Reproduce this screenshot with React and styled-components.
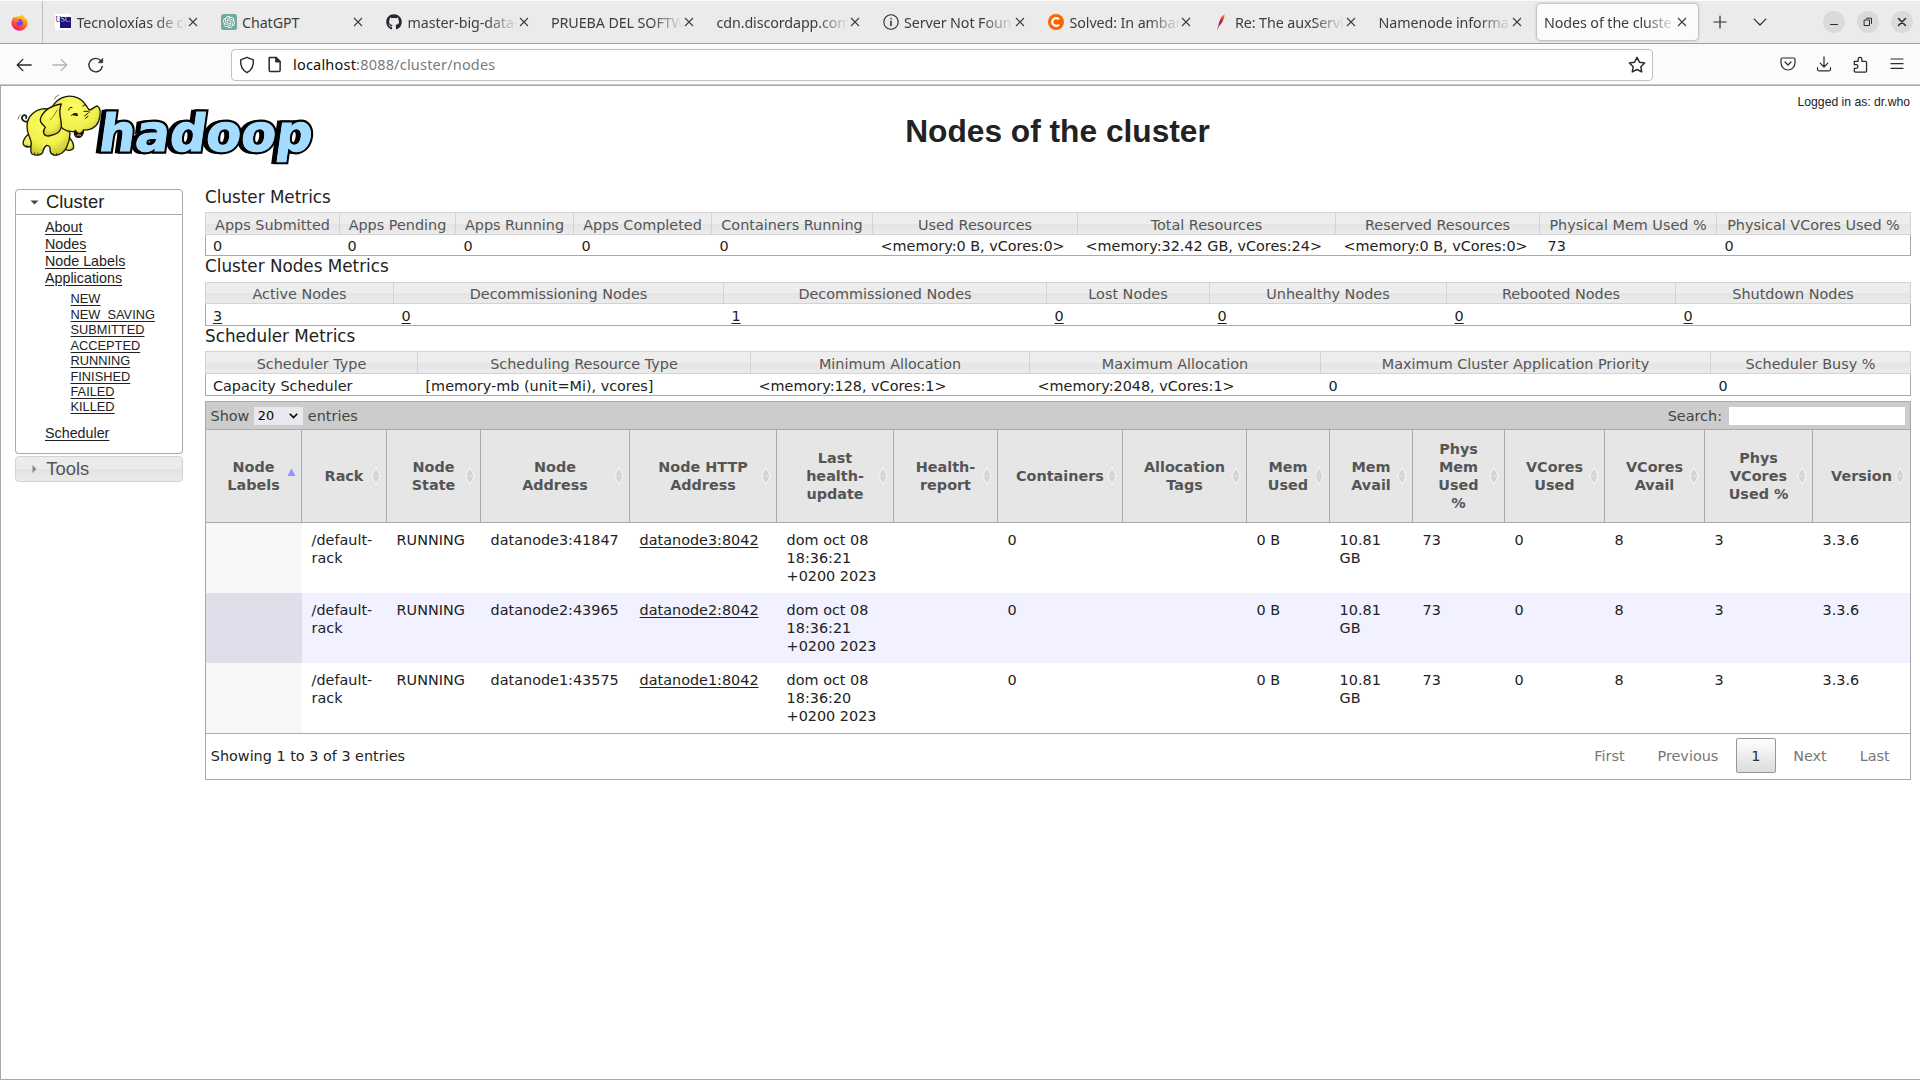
import React from "react";
import styled, { createGlobalStyle, css } from "styled-components";
import { FaGithub, FaFirefoxBrowser } from "react-icons/fa";
import { SiOpenai } from "react-icons/si";

const sans = '"DejaVu Sans", sans-serif';
const arial = '"Liberation Sans", Arial, sans-serif';
const chromeFont = '"Noto Sans", "Open Sans", sans-serif';

const GlobalStyle = createGlobalStyle`
  * { box-sizing: border-box; }
  html, body { margin: 0; padding: 0; background: #fff; }
  body { overflow: hidden; }
  table { border-collapse: separate; border-spacing: 0; }
`;

const Window = styled.div`
  width: 1920px;
  height: 1080px;
  display: flex;
  flex-direction: column;
  overflow: hidden;
  color: #222;
  font-family: ${sans};
`;

/* ---------- browser chrome ---------- */

const TabStrip = styled.div`
  height: 44px;
  flex: none;
  display: flex;
  align-items: center;
  background: #ebebeb;
  border-top: 1px solid #fbfbfb;
  border-bottom: 1px solid #9f9f9f;
  color: #3d3d3d;
  font-family: ${chromeFont};
`;

const PinnedTab = styled.div`
  width: 43px;
  height: 42px;
  display: flex;
  align-items: center;
  justify-content: center;
  padding-right: 3px;
  border-right: 1px solid #bdbdbd;
`;

const Tabs = styled.div`
  display: flex;
  gap: 4px;
  padding-left: 4px;
  height: 36px;
`;

const Tab = styled.div`
  width: 161.5px;
  height: 36px;
  display: flex;
  align-items: center;
  gap: 6px;
  padding: 0 8px;
  border-radius: 4px;
  ${(p) =>
    p.$active &&
    css`
      background: #fbfbfb;
      box-shadow: 0 0 3px rgba(0, 0, 0, 0.45);
    `}
`;

const TabIcon = styled.span`
  width: 16px;
  height: 16px;
  flex: none;
  display: flex;
  align-items: center;
  justify-content: center;
`;

const TabLabel = styled.span`
  flex: 1;
  min-width: 0;
  padding-top: 1px;
  margin-left: -0.5px;
  overflow: hidden;
  white-space: nowrap;
  font-size: 14.3px;
  line-height: 20px;
  letter-spacing: -0.1px;
  ${(p) =>
    p.$fade &&
    css`
      -webkit-mask-image: linear-gradient(to left, transparent, #000 32px);
      mask-image: linear-gradient(to left, transparent, #000 32px);
    `}
`;

const CloseButton = styled.span`
  width: 10px;
  margin: 0 3px 0 -5px;
  display: flex;
`;

const StripActions = styled.div`
  display: flex;
  gap: 24px;
  margin-left: 14px;
`;

const WindowButtons = styled.div`
  display: flex;
  gap: 12px;
  margin-left: auto;
  padding-right: 7px;
`;

const WindowButton = styled.span`
  width: 22px;
  height: 22px;
  border-radius: 50%;
  background: #dadada;
  display: flex;
  align-items: center;
  justify-content: center;
`;

const NavBar = styled.div`
  height: 42px;
  flex: none;
  display: flex;
  align-items: center;
  background: #fbfbfb;
  border-bottom: 1px solid #a9a9a9;
  box-shadow: inset 0 -1px #c9c9c9;
  font-family: ${chromeFont};
`;

const NavButtons = styled.div`
  width: 231px;
  padding-left: 15px;
  display: flex;
  gap: 18px;
`;

const UrlBar = styled.div`
  width: 1422px;
  height: 32px;
  display: flex;
  align-items: center;
  padding: 0 6px;
  background: #fff;
  border: 1px solid #c1c1c1;
  border-radius: 4px;
`;

const UrlIcons = styled.span`
  display: flex;
  align-items: center;
  gap: 10px;
`;

const UrlText = styled.span`
  flex: 1;
  margin-left: 10px;
  padding-bottom: 2px;
  font-size: 14.5px;
  line-height: 20px;
  letter-spacing: 0.2px;
  color: #7b7b7b;
  b {
    font-weight: 400;
    color: #111;
  }
`;

const NavActions = styled.div`
  margin-left: auto;
  padding-right: 15.5px;
  display: flex;
  gap: 20px;
`;

/* ---------- page ---------- */

const Page = styled.div`
  flex: 1;
  border-left: 1px solid #a9a9a9;
  border-bottom: 1px solid #a9a9a9;
  padding: 4px 9px 0 14px;
`;

const Header = styled.div`
  height: 99px;
  display: grid;
  grid-template-columns: 190px 1fr;
`;

const LogoBox = styled.div`
  width: 190px;
  overflow: visible;
  svg {
    display: block;
    overflow: visible;
  }
`;

const TitleBox = styled.div`
  display: flex;
  flex-direction: column;
  padding-right: 1px;
  font-family: ${arial};
`;

const Login = styled.div`
  align-self: flex-end;
  margin-top: 5px;
  font-size: 12.2px;
  line-height: 14px;
`;

const Title = styled.h1`
  margin: 4px 0 0;
  text-align: center;
  font-size: 31.7px;
  line-height: 36px;
  font-weight: 700;
`;

const Columns = styled.div`
  display: grid;
  grid-template-columns: 168px 1706px;
  column-gap: 22px;
  align-items: start;
`;

const Sidebar = styled.nav`
  font-family: ${arial};
`;

const Section = styled.h3`
  margin: 0;
  height: 26px;
  display: flex;
  align-items: center;
  gap: ${(p) => (p.$open ? 7 : 9.3)}px;
  padding-left: ${(p) => (p.$open ? 14 : 16)}px;
  font-weight: 400;
  font-size: 18.4px;
  line-height: 24px;
  border: 1px solid ${(p) => (p.$open ? "#aaa" : "#d3d3d3")};
  border-radius: ${(p) => (p.$open ? "4px 4px 0 0" : "4px")};
  color: ${(p) => (p.$open ? "#212121" : "#555")};
  background: ${(p) =>
    p.$open ? "#fff" : "linear-gradient(#ececec 50%, #e3e3e3 50%, #ebebeb)"};
`;

const SectionBody = styled.div`
  height: 239px;
  margin-bottom: 2px;
  padding: 4px 0 0 29px;
  border: 1px solid #aaa;
  border-top: 0;
  border-radius: 0 0 4px 4px;
`;

const MenuLink = styled.a`
  display: block;
  font-size: ${(p) => (p.$small ? 12.8 : 14.3)}px;
  line-height: ${(p) => (p.$small ? 15.45 : 17)}px;
  color: #222;
  text-decoration: underline;
  text-decoration-thickness: 1px;
  text-underline-offset: 2px;
`;

const SubMenu = styled.div`
  padding: 4.3px 0 10.1px 25.5px;
`;

const Main = styled.main`
  display: flex;
  flex-direction: column;
`;

const MetricHeading = styled.h3`
  margin: ${(p) => p.$pull || 0}px 0 0;
  height: ${(p) => p.$height}px;
  font-size: 16.8px;
  line-height: 20px;
  font-weight: 400;
`;

const Table = styled.table`
  width: 1706px;
  table-layout: fixed;
  font-size: 14.4px;
  line-height: 18px;
`;

const MetricTh = styled.th`
  height: ${(p) => p.$height}px;
  padding: ${(p) => p.$top}px 0 0;
  vertical-align: top;
  font-weight: 400;
  color: #555;
  white-space: nowrap;
  background: linear-gradient(#ededed 50%, #e4e4e4 50%, #ebebeb);
  border: 1px solid #d3d3d3;
  border-left-width: 0;
  &:first-child {
    border-left-width: 1px;
  }
`;

const MetricTd = styled.td`
  height: ${(p) => p.$height}px;
  padding: ${(p) => p.$top}px 0 0 7.5px;
  vertical-align: top;
  white-space: nowrap;
  border-bottom: 1px solid #aaa;
  &:first-child {
    padding-left: 7px;
    border-left: 1px solid #aaa;
  }
  &:last-child {
    border-right: 1px solid #aaa;
  }
`;

const CellLink = styled.a`
  color: #222;
  text-decoration: underline;
  text-decoration-thickness: 1px;
  text-underline-offset: 2px;
`;

const Toolbar = styled.div`
  height: 28px;
  margin-top: 5px;
  display: flex;
  align-items: center;
  padding: 0 5px 0 4.5px;
  background: #ccc;
  border: 1px solid #aaa;
  border-bottom: 0;
  font-size: 14.4px;
  line-height: 18px;
  color: #444;
`;

const Select = styled.span`
  width: 49px;
  height: 18px;
  margin: 0 5px 0 4.5px;
  padding: 0 5px 0 4px;
  display: flex;
  align-items: center;
  justify-content: space-between;
  background: #e9e9ed;
  color: #000;
  font-size: 12.8px;
`;

const SearchInput = styled.input`
  width: 176px;
  height: 18px;
  margin-left: 7px;
  padding: 0;
  border: 0;
  background: #fff;
`;

const SearchLabel = styled.label`
  margin-left: auto;
  display: flex;
  align-items: center;
`;

const HeadCell = styled.th`
  height: 94px;
  padding: 0;
  background: #e6e6e6;
  color: #555;
  border: 1px solid #aaa;
  border-left-width: 0;
  &:first-child {
    border-left-width: 1px;
  }
`;

const HeadInner = styled.div`
  display: grid;
  grid-template-columns: 15px 1fr 15px;
  align-items: center;
  text-align: center;
  white-space: pre;
`;

const HeadText = styled.span`
  grid-column: 2;
  justify-self: center;
`;

const BodyRow = styled.tr`
  background: ${(p) => (p.$even ? "#f1f1ff" : "#fff")};
  td:first-child {
    border-left: 1px solid #aaa;
    background: ${(p) => (p.$even ? "#dfdfeb" : "#f7f7f7")};
  }
  td:last-child {
    border-right: 1px solid #aaa;
  }
`;

const BodyCell = styled.td`
  height: 70px;
  padding: 8px 0 8px 9.6px;
  vertical-align: top;
  white-space: pre;
`;

const Footer = styled.div`
  height: 47px;
  display: flex;
  align-items: center;
  padding: 0 5px 2px 4.8px;
  border: 1px solid #aaa;
  font-size: 14.4px;
  line-height: 18px;
`;

const Pager = styled.div`
  margin-left: auto;
  display: flex;
  gap: 2.1px;
`;

const PageButton = styled.span`
  height: 35px;
  padding: 0 14.4px;
  display: flex;
  align-items: center;
  border: 1px solid ${(p) => (p.$current ? "#979797" : "transparent")};
  border-radius: 2px;
  color: ${(p) => (p.$current ? "#333" : "#777")};
  background: ${(p) => (p.$current ? "linear-gradient(#fff, #dcdcdc)" : "none")};
`;

/* ---------- icons ---------- */

const Stroke = ({ w = 18, vb = 16, color = "#2b2b2b", sw = 1.2, children }) => (
  <svg width={w} height={w} viewBox={`0 0 ${vb} ${vb}`} fill="none" stroke={color}
    strokeWidth={sw} strokeLinecap="round" strokeLinejoin="round">
    {children}
  </svg>
);

const CloseIcon = () => (
  <svg width="10" height="10" viewBox="0 0 10 10" stroke="#3d3d3d" strokeWidth="1.1">
    <path d="M1 1l8 8M9 1l-8 8" />
  </svg>
);

const FirefoxIcon = () => (
  <svg width="17" height="17" viewBox="0 0 512 512">
    <defs>
      <linearGradient id="fx" x1="0.8" y1="0" x2="0.3" y2="1">
        <stop offset="0" stopColor="#fff14a" />
        <stop offset="0.35" stopColor="#ff9a1f" />
        <stop offset="0.7" stopColor="#ff4a3d" />
        <stop offset="1" stopColor="#e3158a" />
      </linearGradient>
    </defs>
    <circle cx="250" cy="275" r="215" fill="url(#fx)" />
    <circle cx="262" cy="262" r="105" fill="#8145e6" />
    <FaFirefoxBrowser size={512} fill="url(#fx)" />
  </svg>
);

const UscIcon = () => (
  <svg width="16" height="16" viewBox="0 0 16 16">
    <rect width="16" height="16" fill="#fff" />
    <rect x="5" y="3" width="11" height="11" fill="#17147a" />
    <text x="0.4" y="8.4" fontFamily="Liberation Serif" fontSize="7.5" fill="#17147a">U</text>
    <text x="5.8" y="8.4" fontFamily="Liberation Serif" fontSize="7.5" fill="#cfcfe8">SC</text>
  </svg>
);

const GptIcon = () => (
  <svg width="16" height="16" viewBox="0 0 16 16">
    <rect width="16" height="16" rx="2.5" fill="#74aa9c" />
    <SiOpenai x={2} y={2} size={12} color="#fff" />
  </svg>
);

const InfoIcon = () => (
  <Stroke w={16} sw={1.1}>
    <circle cx="8" cy="8" r="7.2" />
    <path d="M8 7.2v4.2M8 4.6v.1" strokeWidth="1.5" />
  </Stroke>
);

const ClouderaIcon = () => (
  <svg width="16" height="16" viewBox="0 0 16 16">
    <circle cx="8" cy="8" r="8" fill="#f96702" />
    <path d="M11 5.4a3.9 3.9 0 1 0 0 5.2" fill="none" stroke="#fff" strokeWidth="2.1" />
  </svg>
);

const FeatherIcon = () => (
  <svg width="16" height="16" viewBox="0 0 16 16">
    <defs>
      <linearGradient id="fe" x1="1" y1="0" x2="0" y2="1">
        <stop offset="0" stopColor="#f69923" />
        <stop offset="0.4" stopColor="#d3202f" />
        <stop offset="0.75" stopColor="#7e2c86" />
        <stop offset="1" stopColor="#bdb6d8" />
      </linearGradient>
    </defs>
    <path d="M10.6 0.2C8 1.6 5.6 5.8 4.6 10.2L3 15.8l0.5 0.1 1.7-4.1c2.6-2 5.6-7.4 5.4-11.6z" fill="url(#fe)" />
  </svg>
);

const SortBoth = () => (
  <svg width="10" height="18" viewBox="0 0 10 18">
    <path d="M5 1L9.2 8.6H0.8zM5 17L9.2 9.4H0.8z" fill="#d4d4d4" />
    <path d="M5 0.6L9.4 9 5 17.4 0.6 9z" fill="none" stroke="#fff" strokeWidth="1" strokeDasharray="2 0.5" />
  </svg>
);

const SortAsc = () => (
  <svg width="10" height="18" viewBox="0 0 10 18">
    <path d="M5.5 1.5L9.500 9H1.500z" fill="#8f93ff" />
  </svg>
);

const wordProps = {
  x: 0,
  y: 0,
  fontFamily: "DejaVu Sans",
  fontWeight: 700,
  fontSize: 154,
  textLength: 640,
  lengthAdjust: "spacingAndGlyphs",
  strokeLinejoin: "miter",
  strokeMiterlimit: 3,
};

const HadoopLogo = () => (
  <svg width="300" height="75" viewBox="45 18 900 225">
    <defs>
      <radialGradient id="skin" cx="0.45" cy="0.3" r="0.8">
        <stop offset="0" stopColor="#fdfd62" />
        <stop offset="0.6" stopColor="#f1f04c" />
        <stop offset="1" stopColor="#b9b62c" />
      </radialGradient>
    </defs>
    <g transform="translate(282 202) skewX(-8)">
      <text {...wordProps} fill="#000" stroke="#000" strokeWidth="14">hadoop</text>
    </g>
    <g transform="translate(292 200) skewX(-8)">
      <text {...wordProps} fill="#a4dcff" stroke="#000" strokeWidth="16" paintOrder="stroke">hadoop</text>
      <text {...wordProps} fill="#a4dcff" stroke="#a4dcff" strokeWidth="3" aria-hidden="true">hadoop</text>
    </g>
    <g fill="url(#skin)" stroke="#1a1a0a" strokeWidth="4" strokeLinejoin="round" strokeLinecap="round">
      <path d="M84 112C70 116 62 104 68 96C74 90 82 96 78 102" fill="none" strokeWidth="5" />
      <path d="M195 150C212 160 224 180 220 194C214 202 198 200 196 194L188 160Z" />
      <path d="M86 150C76 158 66 172 70 182C76 192 92 190 98 184L108 160Z" />
      <path d="M135 74C105 76 82 96 81 125C80 150 92 160 94 178C92 192 90 206 96 210C108 216 124 214 128 206C130 196 130 190 140 184C148 184 152 190 150 200C152 212 166 218 180 210C196 204 208 180 210 150L190 80Z" />
      <path d="M158 66C172 44 196 32 222 38C250 44 256 64 268 78C280 76 284 66 292 66C302 72 302 92 296 112C288 132 268 140 250 138C252 152 242 162 232 160C224 158 222 148 224 142C196 146 178 130 172 110Z" />
      <path d="M226 139C232 150 240 152 248 142C250 154 242 161 233 159C226 156 225 148 226 139Z" fill="#111" />
      <path d="M232 154Q238 150 242 155" stroke="#e45b4b" fill="none" />
      <path d="M184 60C160 64 132 76 122 102C116 116 130 122 136 130C126 142 130 156 146 156C164 152 182 148 184 126C186 108 172 88 184 60Z" />
    </g>
    <g fill="none" stroke="#1a1a0a" strokeWidth="3" strokeLinecap="round">
      <path d="M206 78Q208 68 216 70M248 66Q254 60 260 64M252 82Q258 80 268 84M254 96l10-8M256 103l8-6M214 94Q222 84 233 90" />
      <path d="M220 92l8-4 4 6z" fill="#111" />
      <path d="M164 45Q166 36 176 33M54 106Q54 96 62 92M150 108Q160 100 172 78" strokeWidth="1.6" />
      <path d="M104 206v6M114 207v5M160 209v5M170 208v5M80 184v5" strokeWidth="2" />
    </g>
  </svg>
);

/* ---------- data ---------- */

const tabs = [
  { label: "Tecnoloxías de co", icon: <UscIcon /> },
  { label: "ChatGPT", icon: <GptIcon />, short: true },
  { label: "master-big-data-", icon: <FaGithub size={16} color="#24292f" /> },
  { label: "PRUEBA DEL SOFTW" },
  { label: "cdn.discordapp.com" },
  { label: "Server Not Foun", icon: <InfoIcon /> },
  { label: "Solved: In ambar", icon: <ClouderaIcon /> },
  { label: "Re: The auxServi", icon: <FeatherIcon /> },
  { label: "Namenode informa" },
  { label: "Nodes of the cluste", active: true },
];

const metrics = [
  {
    title: "Cluster Metrics",
    pull: -2,
    headingHeight: 25,
    head: 23,
    headTop: 3,
    body: 21,
    top: 2,
    cols: [135, 116, 118, 138, 161, 205, 258, 204, 177, 194],
    names: ["Apps Submitted", "Apps Pending", "Apps Running", "Apps Completed", "Containers Running",
      "Used Resources", "Total Resources", "Reserved Resources", "Physical Mem Used %", "Physical VCores Used %"],
    values: ["0", "0", "0", "0", "0", "<memory:0 B, vCores:0>", "<memory:32.42 GB, vCores:24>",
      "<memory:0 B, vCores:0>", "73", "0"],
  },
  {
    title: "Cluster Nodes Metrics",
    headingHeight: 26,
    head: 22,
    headTop: 2,
    body: 22,
    top: 3,
    links: true,
    cols: [189, 330, 323, 163, 237, 229, 235],
    names: ["Active Nodes", "Decommissioning Nodes", "Decommissioned Nodes", "Lost Nodes", "Unhealthy Nodes",
      "Rebooted Nodes", "Shutdown Nodes"],
    values: ["3", "0", "1", "0", "0", "0", "0"],
  },
  {
    title: "Scheduler Metrics",
    headingHeight: 25,
    head: 23,
    headTop: 3,
    body: 22,
    top: 3,
    cols: [213, 333, 279, 291, 390, 200],
    names: ["Scheduler Type", "Scheduling Resource Type", "Minimum Allocation", "Maximum Allocation",
      "Maximum Cluster Application Priority", "Scheduler Busy %"],
    values: ["Capacity Scheduler", "[memory-mb (unit=Mi), vcores]", "<memory:128, vCores:1>",
      "<memory:2048, vCores:1>", "0", "0"],
  },
];

const nodeCols = [97, 85, 94, 149, 147, 117, 104, 125, 124, 83, 83, 92, 100, 100, 108, 98];
const nodeNames = ["Node\nLabels", "Rack", "Node\nState", "Node\nAddress", "Node HTTP\nAddress",
  "Last\nhealth-\nupdate", "Health-\nreport", "Containers", "Allocation\nTags", "Mem\nUsed", "Mem\nAvail",
  "Phys\nMem\nUsed\n%", "VCores\nUsed", "VCores\nAvail", "Phys\nVCores\nUsed %", "Version"];

const nodes = [
  { name: "datanode3", port: 41847, time: "18:36:21" },
  { name: "datanode2", port: 43965, time: "18:36:21" },
  { name: "datanode1", port: 43575, time: "18:36:20" },
];

const nodeCells = (n) => [
  "", "/default-\nrack", "RUNNING", `${n.name}:${n.port}`,
  <CellLink key="http">{`${n.name}:8042`}</CellLink>,
  `dom oct 08\n${n.time}\n+0200 2023`, "", "0", "", "0 B", "10.81\nGB", "73", "0", "8", "3", "3.3.6",
];

const states = ["NEW", "NEW_SAVING", "SUBMITTED", "ACCEPTED", "RUNNING", "FINISHED", "FAILED", "KILLED"];

const Cols = ({ widths }) => (
  <colgroup>
    {widths.map((w, i) => (
      <col key={i} width={w} />
    ))}
  </colgroup>
);

const MetricBlock = ({ m }) => (
  <>
    <MetricHeading $height={m.headingHeight} $pull={m.pull}>{m.title}</MetricHeading>
    <Table>
      <Cols widths={m.cols} />
      <thead>
        <tr>{m.names.map((n) => <MetricTh key={n} $height={m.head} $top={m.headTop}>{n}</MetricTh>)}</tr>
      </thead>
      <tbody>
        <tr>
          {m.values.map((v, i) => (
            <MetricTd key={i} $height={m.body} $top={m.top}>{m.links ? <CellLink>{v}</CellLink> : v}</MetricTd>
          ))}
        </tr>
      </tbody>
    </Table>
  </>
);

export default function App() {
  return (
    <Window>
      <GlobalStyle />
      <TabStrip>
        <PinnedTab><FirefoxIcon /></PinnedTab>
        <Tabs>
          {tabs.map((t) => (
            <Tab key={t.label} $active={t.active}>
              {t.icon && <TabIcon>{t.icon}</TabIcon>}
              <TabLabel $fade={!t.short}>{t.label}</TabLabel>
              <CloseButton><CloseIcon /></CloseButton>
            </Tab>
          ))}
        </Tabs>
        <StripActions>
          <Stroke w={16}><path d="M8 2v12M2 8h12" /></Stroke>
          <Stroke w={16}><path d="M2.2 5.2L8 11l5.8-5.8" /></Stroke>
        </StripActions>
        <WindowButtons>
          <WindowButton><Stroke w={12} vb={12}><path d="M2.5 8.5h7" /></Stroke></WindowButton>
          <WindowButton><Stroke w={12} vb={12} sw={1}><path d="M2.5 4h5v5.5h-5zM4.5 2.2h5v5.3" /></Stroke></WindowButton>
          <WindowButton><Stroke w={12} vb={12} sw={1.5}><path d="M2.5 2.5l7 7M9.5 2.5l-7 7" /></Stroke></WindowButton>
        </WindowButtons>
      </TabStrip>
      <NavBar>
        <NavButtons>
          <Stroke><path d="M14.4 8H2M7 3L2 8l5 5" /></Stroke>
          <Stroke color="#b3b3b3"><path d="M1.6 8H14M9 3l5 5-5 5" /></Stroke>
          <Stroke>
            <path d="M13.6 9.2A6 6 0 1 1 12.3 4.2" />
            <path d="M14 2.2v3.8H10.2z" fill="#2b2b2b" strokeWidth="0.5" />
          </Stroke>
        </NavButtons>
        <UrlBar>
          <UrlIcons>
            <Stroke sw={1.3}><path d="M8 1.2l5.6 2.2c.4 4.6-1.2 9-5.6 11.4C3.6 12.4 2 8 2.4 3.4z" /></Stroke>
            <Stroke w={17} sw={1.4}>
              <path d="M3 1.5h6.5L13.3 5.3V13.3a1.2 1.2 0 0 1-1.2 1.2H4.2A1.2 1.2 0 0 1 3 13.3z" />
              <path d="M9.3 1.5v4h4z" fill="#2b2b2b" />
            </Stroke>
          </UrlIcons>
          <UrlText><b>localhost</b>:8088/cluster/nodes</UrlText>
          <Stroke sw={1.3}>
            <path d="M8 1.2l2.1 4.3 4.7.7-3.4 3.3.8 4.7L8 12l-4.2 2.2.8-4.7L1.2 6.2l4.7-.7z" />
          </Stroke>
        </UrlBar>
        <NavActions>
          <Stroke w={16}>
            <path d="M2.5 2h11A1.5 1.5 0 0 1 15 3.5V7A7 7 0 0 1 1 7V3.5A1.5 1.5 0 0 1 2.5 2zM5 6l3 3 3-3" />
          </Stroke>
          <Stroke w={16}><path d="M8 .8v10M4.2 7.2L8 11l3.800-3.800M1.5 11.5v1.800A1.5 1.5 0 0 0 3 14.8h10a1.5 1.5 0 0 0 1.500-1.500V11.5" /></Stroke>
          <Stroke w={17}>
            <path d="M2.2 5h3.600V3a1.7 1.7 0 0 1 3.500 0v2h3.400a1 1 0 0 1 1 1v8.200a1 1 0 0 1-1 1H3.200a1 1 0 0 1-1-1v-2.500h1.600a1.7 1.7 0 0 0 0-3.500H2.200z" />
          </Stroke>
          <Stroke w={16}><path d="M2 3h12M2 7.7h12M2 12.4h12" /></Stroke>
        </NavActions>
      </NavBar>

      <Page>
        <Header>
          <LogoBox><HadoopLogo /></LogoBox>
          <TitleBox>
            <Login>Logged in as: dr.who</Login>
            <Title>Nodes of the cluster</Title>
          </TitleBox>
        </Header>
        <Columns>
          <Sidebar>
            <Section $open>
              <svg width="9" height="5" viewBox="0 0 9 5"><path d="M0.5 0.5h8L4.5 4.5z" fill="#454545" /></svg>
              Cluster
            </Section>
            <SectionBody>
              <MenuLink>About</MenuLink>
              <MenuLink>Nodes</MenuLink>
              <MenuLink>Node Labels</MenuLink>
              <MenuLink>Applications</MenuLink>
              <SubMenu>
                {states.map((s) => <MenuLink key={s} $small>{s}</MenuLink>)}
              </SubMenu>
              <MenuLink>Scheduler</MenuLink>
            </SectionBody>
            <Section>
              <svg width="5" height="8" viewBox="0 0 5 8"><path d="M0.5 0L4.5 4L0.5 8z" fill="#888" /></svg>
              Tools
            </Section>
          </Sidebar>
          <Main>
            {metrics.map((m) => <MetricBlock key={m.title} m={m} />)}
            <Toolbar>
              Show
              <Select>
                20
                <svg width="9" height="6" viewBox="0 0 9 6"><path d="M0.8 0.8L4.5 4.5 8.2 0.8" fill="none" stroke="#000" strokeWidth="1.6" /></svg>
              </Select>
              entries
              <SearchLabel>Search:<SearchInput /></SearchLabel>
            </Toolbar>
            <Table>
              <Cols widths={nodeCols} />
              <thead>
                <tr>
                  {nodeNames.map((n, i) => (
                    <HeadCell key={n}>
                      <HeadInner><HeadText>{n}</HeadText>{i === 0 ? <SortAsc /> : <SortBoth />}</HeadInner>
                    </HeadCell>
                  ))}
                </tr>
              </thead>
              <tbody>
                {nodes.map((n, r) => (
                  <BodyRow key={n.name} $even={r % 2 === 1}>
                    {nodeCells(n).map((c, i) => <BodyCell key={i}>{c}</BodyCell>)}
                  </BodyRow>
                ))}
              </tbody>
            </Table>
            <Footer>
              Showing 1 to 3 of 3 entries
              <Pager>
                <PageButton>First</PageButton>
                <PageButton>Previous</PageButton>
                <PageButton $current>1</PageButton>
                <PageButton>Next</PageButton>
                <PageButton>Last</PageButton>
              </Pager>
            </Footer>
          </Main>
        </Columns>
      </Page>
    </Window>
  );
}
